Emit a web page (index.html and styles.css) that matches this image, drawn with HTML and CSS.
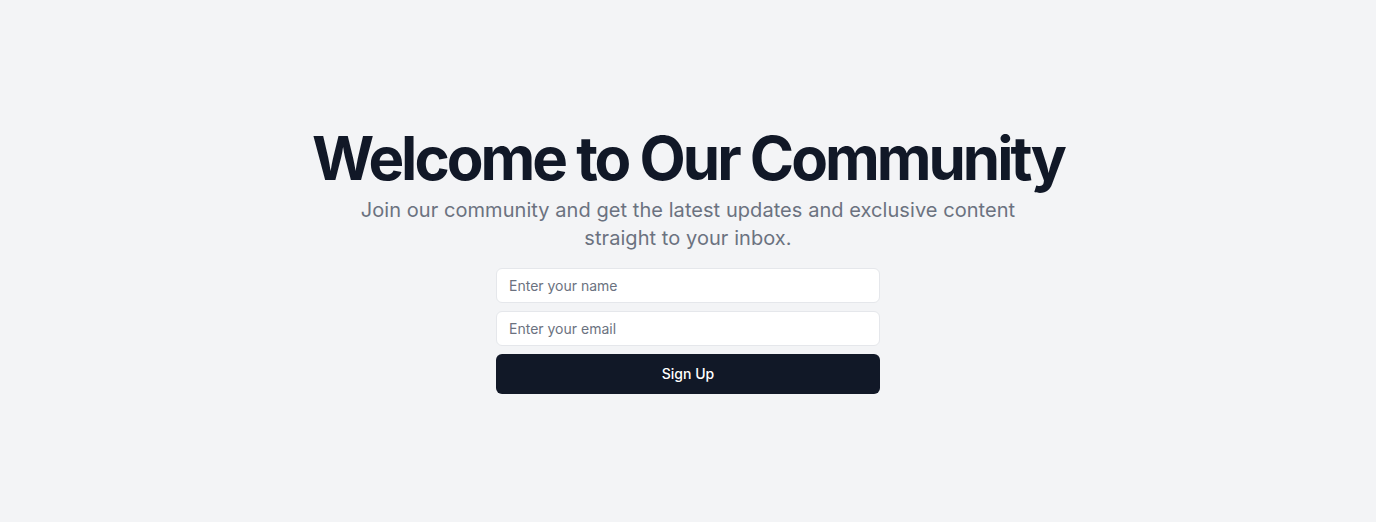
FILE: index.html
```html
<!DOCTYPE html>
<html lang="en">
<head>
<meta charset="utf-8">
<title>Welcome</title>
<link rel="stylesheet" href="styles.css">
</head>
<body>
<main class="page">
  <section class="hero">
    <h1 class="title">Welcome to Our Community</h1>
    <p class="subtitle">Join our community and get the latest updates and exclusive content straight to your inbox.</p>
    <form class="form">
      <input class="field" type="text" placeholder="Enter your name">
      <input class="field" type="email" placeholder="Enter your email">
      <button class="btn" type="button">Sign Up</button>
    </form>
  </section>
</main>
</body>
</html>
```

FILE: styles.css
```css
* { box-sizing: border-box; }
html, body { margin: 0; padding: 0; }
body {
  background: #f3f4f6;
  font-family: Inter, "Noto Sans", sans-serif;
  color: #111827;
}
.page {
  min-height: 522px;
  display: flex;
  align-items: center;
  justify-content: center;
}
.hero {
  display: flex;
  flex-direction: column;
  align-items: center;
  text-align: center;
}
.title {
  margin: 0;
  font-size: 60px;
  line-height: 60px;
  font-weight: 700;
  letter-spacing: -0.05em;
  color: #111827;
}
.subtitle {
  margin: 8px 0 0;
  max-width: 672px;
  font-size: 20px;
  line-height: 28px;
  letter-spacing: 0.003em;
  color: #6b7280;
}
.form {
  margin-top: 16px;
  width: 384px;
  display: flex;
  flex-direction: column;
  gap: 8px;
}
.field {
  height: 35px;
  padding: 0 12px;
  border: 1px solid #e5e7eb;
  border-radius: 6px;
  background: #fff;
  font-family: Inter, sans-serif;
  font-size: 14px;
  color: #111827;
  outline: none;
}
.field::placeholder { color: #6b7280; }
.btn {
  height: 40px;
  padding: 0 0 2px;
  border: 0;
  border-radius: 6px;
  background: #111827;
  color: #fff;
  font-family: Inter, sans-serif;
  font-size: 14px;
  font-weight: 500;
  cursor: pointer;
}
```
